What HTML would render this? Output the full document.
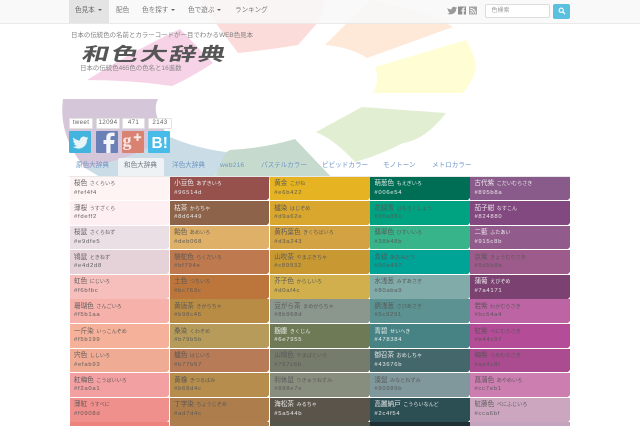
<!DOCTYPE html>
<html lang="ja"><head><meta charset="utf-8"><title>和色大辞典</title>
<style>
html{margin:0;padding:0;background:#fff;width:640px;height:426px;overflow:hidden}
body{margin:0;padding:0;background:#fff;width:640px;height:426px;overflow:hidden;position:relative;font-family:"Liberation Sans","Noto Sans CJK JP",sans-serif}
.a{position:absolute;white-space:nowrap}
#bg{position:absolute;left:0;top:0}
#nav{position:absolute;left:0;top:0;width:640px;height:22.5px;background:rgba(248,248,248,.88);border-bottom:1px solid #e9e9e9}
#act{position:absolute;left:69px;top:0;width:39.5px;height:22.5px;background:#e4e4e4}
.n{font-size:6.6px;color:#777;top:7px;line-height:8px;filter:blur(.2px)}
.car{display:inline-block;border-top:2px solid #666;border-left:2px solid transparent;border-right:2px solid transparent;vertical-align:1px;margin-left:3px}
.t{font-size:6.6px;color:#7097c4;top:162px;line-height:8px;filter:blur(.2px)}
#grid{position:absolute;left:70px;top:176.5px;width:500.6px;height:249.5px;overflow:hidden;display:grid;grid-template-columns:repeat(5,100.12px);grid-auto-rows:24.6px}
.c{position:relative;margin:0 .8px .9px 0;overflow:hidden;color:#555;filter:blur(.2px)}
.c:after{content:"";position:absolute;right:0;bottom:0;border-bottom:2px solid #fff;border-left:2px solid transparent}
.c b{position:absolute;left:4px;top:3.5px;font-weight:normal;font-size:6.6px;line-height:8px;white-space:nowrap;opacity:.92}
.c b span{font-size:5.1px;margin-left:2.5px}
.c i{position:absolute;left:4px;top:12px;font-style:normal;font-size:5.9px;line-height:8px;letter-spacing:.72px;opacity:.92}
.l{color:#f4f4f4}
.cnt{top:118px;height:8.5px;background:#fff;border:.5px solid #e2e2e2;border-radius:1px;font-size:6.2px;line-height:8.5px;text-align:center;color:#666;letter-spacing:.35px;box-sizing:content-box}
.ic{top:131px;width:22px;height:22px;overflow:hidden}
</style></head><body>
<svg id="bg" width="640" height="426" viewBox="0 0 640 426">
<path d="M87 80 Q135 50 180 29 L213 63 Q190 78 172 86 Q130 80 87 80Z" fill="#f7d3e7"/>
<path d="M212 18 L200 0 L325 0 L320 20 L298 45 Q268 50 238 53Z" fill="#fcdcda"/>
<path d="M325 45 L370 0 Q420 8 453 27 L367 58 Q350 47 325 45Z" fill="#fee8d8"/>
<path d="M375 67 L466 40 Q478 60 475 72 Q472 82 463 93 L373 93 Q380 80 375 67Z" fill="#fffdd3"/>
<path d="M316 132 L362 107 L446 113 Q425 140 403 143 Q380 155 355 162 Q335 140 316 132Z" fill="#e2eed2"/>
<path d="M220 160 Q225 152 230 150 Q265 148 295 139 L334 180 L215 180Z" fill="#c6dacd"/>
<path d="M85 168 Q130 160 170 137 Q195 148 226 152 L215 177 L100 177Z" fill="#cadce6"/>
<path d="M63 99 L158 99 Q150 115 170 137 Q130 160 85 168 Q58 135 63 99Z" fill="#d6c6da"/>
</svg>
<div id="nav"></div><div id="act"></div>
<div class="a n" style="left:75px;color:#666">色見本<span class="car"></span></div>
<div class="a n" style="left:116px">配色</div>
<div class="a n" style="left:142px">色を探す<span class="car"></span></div>
<div class="a n" style="left:188px">色で遊ぶ<span class="car"></span></div>
<div class="a n" style="left:235px">ランキング</div>
<svg class="a" style="left:447px;top:6px" width="32" height="10" viewBox="0 0 32 10">
<path d="M0 2 Q2 3.5 4.5 3.5 Q4.6 1 7 .8 Q8 .8 8.6 1.4 L10 1 L9.2 2.2 L10 2 L9.2 3 Q9 7.5 4 8.4 Q2 8.6 .3 7.6 Q2 7.6 3 6.8 Q1.6 6.4 1.2 5.4 L2 5.3 Q.6 4.6 .7 3.4 L1.4 3.6 Q.3 3 0 2Z" fill="#999"/>
<rect x="11" y="0.5" width="8" height="8" fill="#8f8f8f"/><path d="M16.8 8.5V5.4H18V4.2H16.8V3.2Q16.8 2.6 17.4 2.6H18V1.5H17Q15.3 1.5 15.3 3.1V4.2H14.2V5.4H15.3V8.5Z" fill="#f6f6f6"/>
<rect x="22" y="0.5" width="8" height="8" fill="#a5a5a5"/><path d="M23.2 2.2Q28 2.4 28.6 7.6M23.2 4.4Q26 4.6 26.5 7.6" stroke="#f6f6f6" fill="none"/><circle cx="24" cy="6.9" r=".8" fill="#f6f6f6"/>
</svg>
<div class="a" style="left:485px;top:3.5px;width:65px;height:14.5px;box-sizing:border-box;background:#fff;border:.7px solid #ddd;border-radius:2px;font-size:6px;line-height:13px;color:#999;padding-left:5.5px">色検索</div>
<div class="a" style="left:553px;top:3.5px;width:17px;height:15px;background:#5bc0de;border-radius:2px"></div>
<svg class="a" style="left:558px;top:7px" width="8" height="8" viewBox="0 0 8 8"><circle cx="3.2" cy="3.2" r="2.1" fill="none" stroke="#fff" stroke-width="1.1"/><path d="M4.8 4.8L7 7" stroke="#fff" stroke-width="1.3"/></svg>

<div class="a" style="left:71px;top:31px;font-size:6.45px;line-height:9px;color:#808080;filter:blur(.2px)">日本の伝統色の名前とカラーコードが一目でわかるWEB色見本</div>
<div class="a" style="left:83px;top:38.5px;font-size:27px;line-height:27px;font-weight:bold;color:#555;letter-spacing:2px;transform-origin:0 50%;transform:skewX(-14deg) scaleY(.68);font-family:'Noto Sans CJK JP',sans-serif">和色大辞典</div>
<div class="a" style="left:80px;top:64px;font-size:6.45px;line-height:9px;color:#868686;filter:blur(.2px)">日本の伝統色465色の色名と16進数</div>

<div class="a cnt" style="left:69px;width:22px">tweet</div>
<div class="a cnt" style="left:96px;width:22px">12094</div>
<div class="a cnt" style="left:122px;width:21px">471</div>
<div class="a cnt" style="left:148px;width:22px">2143</div>
<svg class="a ic" style="left:69px" viewBox="0 0 22 22"><rect width="22" height="22" rx="1" fill="#43b4de"/><path d="M4 6.5Q7.5 9.5 11 9.5Q11 6 14.5 5.5Q16 5.5 17 6.5L19 6L18 7.5L19.5 7L18 8.7Q18 15.5 11 17.5Q7 18 3.8 16Q6.5 16 8 14.8Q5.6 14.5 5 12.7L6.4 12.6Q4.2 11.6 4.2 9.6L5.5 10Q3.6 8.5 4 6.5Z" fill="#e8f4f8"/></svg>
<svg class="a ic" style="left:95.5px" viewBox="0 0 22 22"><rect width="22" height="22" rx="1" fill="#6b80b6"/><path d="M14.5 22V13H18L18.5 9H14.5V6.8Q14.5 5 16.3 5H18.6V1.6H15.5Q10.3 1.6 10.3 6.5V9H7.5V13H10.3V22Z" fill="#f4f6fa"/></svg>
<svg class="a ic" style="left:122px" viewBox="0 0 22 22"><rect width="22" height="22" rx="1" fill="#da8272"/><text x="0.5" y="15" font-family="Liberation Serif" font-size="18" font-weight="bold" fill="#f8e8e4">g</text><path d="M15.5 2.5V10M11.8 6.2H19.2" stroke="#f8e8e4" stroke-width="2"/></svg>
<svg class="a ic" style="left:148px" viewBox="0 0 22 22"><rect width="22" height="22" rx="1" fill="#47bce9"/><text x="3.5" y="17" font-family="Liberation Sans" font-size="15.5" font-weight="bold" fill="#fff">B!</text></svg>

<div class="a" style="left:118px;top:158px;width:46px;height:18px;background:#eef2f5;border-radius:2px 2px 0 0"></div>
<div class="a" style="left:69px;top:175.5px;width:501px;height:1px;background:#e8e8e8"></div>
<div class="a t" style="left:76px">原色大辞典</div>
<div class="a t" style="left:124px;color:#6f7a84">和色大辞典</div>
<div class="a t" style="left:172px">洋色大辞典</div>
<div class="a t" style="left:220px;letter-spacing:.2px">web216</div>
<div class="a t" style="left:261px">パステルカラー</div>
<div class="a t" style="left:322px">ビビッドカラー</div>
<div class="a t" style="left:383px">モノトーン</div>
<div class="a t" style="left:432px">メトロカラー</div>

<div id="grid">
<div class="c" style="background:#fef4f4"><b>桜色<span>さくらいろ</span></b><i>#fef4f4</i></div>
<div class="c l" style="background:#96514d"><b>小豆色<span>あずきいろ</span></b><i>#96514d</i></div>
<div class="c" style="background:#e6b422"><b>黄金<span>こがね</span></b><i>#e6b422</i></div>
<div class="c l" style="background:#006e54"><b>萌葱色<span>もえぎいろ</span></b><i>#006e54</i></div>
<div class="c l" style="background:#895b8a"><b>古代紫<span>こだいむらさき</span></b><i>#895b8a</i></div>

<div class="c" style="background:#fdeff2"><b>薄桜<span>うすざくら</span></b><i>#fdeff2</i></div>
<div class="c l" style="background:#8d6449"><b>枯茶<span>からちゃ</span></b><i>#8d6449</i></div>
<div class="c" style="background:#d9a62e"><b>櫨染<span>はじぞめ</span></b><i>#d9a62e</i></div>
<div class="c" style="background:#00a381"><b>花緑青<span>はなろくしょう</span></b><i>#00a381</i></div>
<div class="c l" style="background:#824880"><b>茄子紺<span>なすこん</span></b><i>#824880</i></div>

<div class="c" style="background:#e9dfe5"><b>桜鼠<span>さくらねず</span></b><i>#e9dfe5</i></div>
<div class="c" style="background:#deb068"><b>飴色<span>あめいろ</span></b><i>#deb068</i></div>
<div class="c" style="background:#d3a243"><b>黄朽葉色<span>きくちばいろ</span></b><i>#d3a243</i></div>
<div class="c" style="background:#38b48b"><b>翡翠色<span>ひすいいろ</span></b><i>#38b48b</i></div>
<div class="c l" style="background:#915c8b"><b>二藍<span>ふたあい</span></b><i>#915c8b</i></div>

<div class="c" style="background:#e4d2d8"><b>鴇鼠<span>ときねず</span></b><i>#e4d2d8</i></div>
<div class="c" style="background:#bf794e"><b>駱駝色<span>らくだいろ</span></b><i>#bf794e</i></div>
<div class="c" style="background:#c89932"><b>山吹茶<span>やまぶきちゃ</span></b><i>#c89932</i></div>
<div class="c" style="background:#00a497"><b>青緑<span>あおみどり</span></b><i>#00a497</i></div>
<div class="c" style="background:#9d5b8b"><b>京紫<span>きょうむらさき</span></b><i>#9d5b8b</i></div>

<div class="c" style="background:#f6bfbc"><b>虹色<span>にじいろ</span></b><i>#f6bfbc</i></div>
<div class="c" style="background:#bc763c"><b>土色<span>つちいろ</span></b><i>#bc763c</i></div>
<div class="c" style="background:#d0af4c"><b>芥子色<span>からしいろ</span></b><i>#d0af4c</i></div>
<div class="c" style="background:#80aba9"><b>水浅葱<span>みずあさぎ</span></b><i>#80aba9</i></div>
<div class="c l" style="background:#7a4171"><b>蒲葡<span>えびぞめ</span></b><i>#7a4171</i></div>

<div class="c" style="background:#f5b1aa"><b>珊瑚色<span>さんごいろ</span></b><i>#f5b1aa</i></div>
<div class="c" style="background:#b98c46"><b>黄唐茶<span>きがらちゃ</span></b><i>#b98c46</i></div>
<div class="c" style="background:#8b968d"><b>豆がら茶<span>まめがらちゃ</span></b><i>#8b968d</i></div>
<div class="c" style="background:#5c9291"><b>錆浅葱<span>さびあさぎ</span></b><i>#5c9291</i></div>
<div class="c" style="background:#bc64a4"><b>若紫<span>わかむらさき</span></b><i>#bc64a4</i></div>

<div class="c" style="background:#f5b199"><b>一斤染<span>いっこんぞめ</span></b><i>#f5b199</i></div>
<div class="c" style="background:#b79b5b"><b>桑染<span>くわぞめ</span></b><i>#b79b5b</i></div>
<div class="c l" style="background:#6e7955"><b>麹塵<span>きくじん</span></b><i>#6e7955</i></div>
<div class="c l" style="background:#478384"><b>青碧<span>せいへき</span></b><i>#478384</i></div>
<div class="c" style="background:#b44c97"><b>紅紫<span>べにむらさき</span></b><i>#b44c97</i></div>

<div class="c" style="background:#efab93"><b>宍色<span>ししいろ</span></b><i>#efab93</i></div>
<div class="c" style="background:#b77b57"><b>櫨色<span>はじいろ</span></b><i>#b77b57</i></div>
<div class="c" style="background:#767c6b"><b>山鳩色<span>やまばといろ</span></b><i>#767c6b</i></div>
<div class="c l" style="background:#43676b"><b>御召茶<span>おめしちゃ</span></b><i>#43676b</i></div>
<div class="c" style="background:#aa4c8f"><b>梅紫<span>うめむらさき</span></b><i>#aa4c8f</i></div>

<div class="c" style="background:#f2a0a1"><b>紅梅色<span>こうばいいろ</span></b><i>#f2a0a1</i></div>
<div class="c" style="background:#b68d4c"><b>黄橡<span>きつるばみ</span></b><i>#b68d4c</i></div>
<div class="c" style="background:#888e7e"><b>利休鼠<span>りきゅうねずみ</span></b><i>#888e7e</i></div>
<div class="c" style="background:#80989b"><b>湊鼠<span>みなとねずみ</span></b><i>#80989b</i></div>
<div class="c" style="background:#cc7eb1"><b>菖蒲色<span>あやめいろ</span></b><i>#cc7eb1</i></div>

<div class="c" style="background:#f0908d"><b>薄紅<span>うすべに</span></b><i>#f0908d</i></div>
<div class="c" style="background:#ad7d4c"><b>丁字染<span>ちょうじぞめ</span></b><i>#ad7d4c</i></div>
<div class="c l" style="background:#5a544b"><b>海松茶<span>みるちゃ</span></b><i>#5a544b</i></div>
<div class="c l" style="background:#2c4f54"><b>高麗納戸<span>こうらいなんど</span></b><i>#2c4f54</i></div>
<div class="c" style="background:#cca6bf"><b>紅藤色<span>べにふじいろ</span></b><i>#cca6bf</i></div>

<div class="c" style="background:#ee827c"></div>
<div class="c" style="background:#ad7e4e"></div>
<div class="c" style="background:#56564b"></div>
<div class="c" style="background:#1f3134"></div>
<div class="c" style="background:#c4a3bf"></div>
</div>
</body></html>
